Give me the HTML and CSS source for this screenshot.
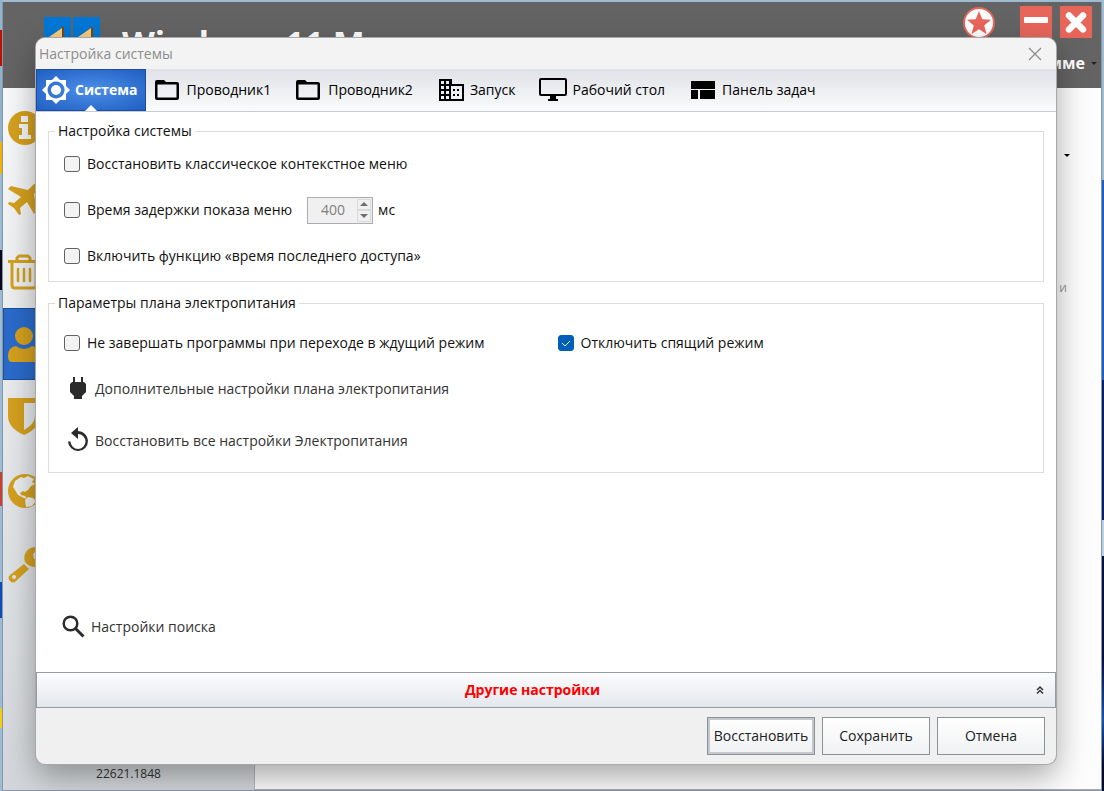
FILE: index.html
```html
<!DOCTYPE html>
<html lang="ru">
<head>
  <meta charset="UTF-8" />
  <title>Настройка системы</title>
  <link rel="stylesheet" href="styles.css">
</head>
<body>
  <div class="app-window">
    <header class="app-header">
      <svg class="app-logo" viewBox="0 0 56 56">
        <path fill="#0078d7" d="M0 0h27v27H0zM29 0h27v27H29zM0 29h27v27H0zM29 29h27v27H29z"/>
        <path fill="#7a4a16" d="M3 22L20 9v47h-8V23H3zM32 22L49 9v47h-8V23h-9z"/>
        <path fill="#f3cf86" d="M5 20L18 11v45h-4V21zM34 20l13-9v45h-4V21z"/>
      </svg>
      <div class="app-title">Windows 11 M</div>
      <div class="app-side">
        <div class="app-controls">
          <button class="star-btn" aria-label="Избранное">
            <svg viewBox="0 0 34 34"><circle cx="17" cy="17" r="15" fill="#fff" stroke="#e8655a" stroke-width="2"/><path fill="#e8655a" d="M17 5l3.300 8.300 8.700.500-6.800 5.600 2.300 8.600-7.500-4.800L9.500 28l2.300-8.600L5 13.800l8.700-.500z"/></svg>
          </button>
          <button class="app-btn" aria-label="Свернуть">
            <svg viewBox="0 0 32 32"><rect x="4" y="11" width="24" height="6" rx="1" fill="#fff"/></svg>
          </button>
          <button class="app-btn" aria-label="Закрыть">
            <svg viewBox="0 0 32 32"><path d="M9 9.500L23 23.500M23 9.500L9 23.500" stroke="#fff" stroke-width="6.500" stroke-linecap="round"/></svg>
          </button>
        </div>
        <button class="about-btn">О программе <span class="caret"></span></button>
      </div>
    </header>
    <div class="app-main">
      <nav class="sidebar">
        <a class="side-item" href="#" aria-label="Информация">
          <svg viewBox="0 0 34 34"><circle cx="17" cy="17" r="17"/><path fill="#f4f5f6" d="M13 5h7v6h-7zM11 13h9v11h3v4H11v-4h3v-7h-3z"/></svg>
        </a>
        <a class="side-item" href="#" aria-label="Оптимизация">
          <svg viewBox="0 0 34 34"><path d="M32 1c-2-2-5-1-7 1l-5 5L3 3 0 6l13 8-7 6-5-1-1 2 6 4 5 7 2-1-1-6 7-6 7 12 3-3-3-17 5-5c2-2 3-3 1-5z"/></svg>
        </a>
        <a class="side-item" href="#" aria-label="Очистка">
          <svg viewBox="0 0 34 34"><path fill="none" stroke="#d4a01e" stroke-width="3" stroke-linejoin="round" d="M0 6.500h32M9 6V3l2-2h9l2 2v3M4 7v23q0 3 3 3h18q3 0 3-3V7"/><path fill="none" stroke="#d4a01e" stroke-width="2.500" stroke-linecap="round" d="M10 14v12M16 14v12M22 14v12"/></svg>
        </a>
        <a class="side-item active" href="#" aria-label="Настройка">
          <svg viewBox="0 0 34 34"><circle cx="16" cy="9" r="9"/><path d="M8 19q8 6 16 0 8 1 8 10 0 6-4 6H4q-4 0-4-6 0-9 8-10z"/></svg>
        </a>
        <a class="side-item tall" href="#" aria-label="Безопасность">
          <svg viewBox="0 0 34 38"><path fill-rule="evenodd" d="M0 0h32v18q0 12-16 19Q0 30 0 18zM16 5v27q11-6 11-14V5z"/></svg>
        </a>
        <a class="side-item tall" href="#" aria-label="Сеть">
          <svg viewBox="0 0 34 34"><circle cx="17" cy="17" r="17"/><path fill="#eceef0" d="M5 13l2-6 6-4 3 1 4-2 6 3-2 3 3 2-4 2-3 4-3 2-2-1-3 2 1 2 4 1 2 3-3-1-6-3-3-5zM17 26l3-3 5 1 3 3-4 5-6 1z"/></svg>
        </a>
        <a class="side-item tall" href="#" aria-label="Утилиты">
          <svg viewBox="0 0 34 34"><path fill-rule="evenodd" d="M17 14A11 11 0 0 1 28-1l4 1-7 6 1 5 5 1 3-2v6a11 11 0 0 1-12 2 11 11 0 0 1-5-4zM16 16l5 5L8 33q-3 3-6 0-3-3 0-6zM6 27a2 2 0 1 0 .100 0z"/></svg>
        </a>
        <div class="build">22621.1848</div>
      </nav>
      <div class="app-page">
        <span class="caret page-caret"></span>
        <span class="page-text">и</span>
      </div>
    </div>
  </div>

  <div class="dialog" role="dialog" aria-labelledby="dialogTitle">
    <div class="dialog-title">
      <span id="dialogTitle">Настройка системы</span>
      <button class="dialog-close" aria-label="Закрыть">
        <svg viewBox="0 0 14 14"><path d="M1 1l12 12M13 1L1 13" fill="none" stroke="#8a8a8a" stroke-width="1.200"/></svg>
      </button>
    </div>

    <nav class="tabs">
      <button class="tab active">
        <svg viewBox="0 0 28 28"><path fill="#fff" fill-rule="evenodd" d="M14 0l4 4h6v6l4 4-4 4v6h-6l-4 4-4-4H4v-6l-4-4 4-4V4h6zM14 5.500a8.500 8.500 0 1 0 .100 0z"/><circle cx="14" cy="14" r="5" fill="#fff"/></svg>
        Система
      </button>
      <button class="tab">
        <svg viewBox="0 0 28 28"><path fill-rule="evenodd" d="M3 4h7l2 2h11q2 0 2 2v14q0 2-2 2H3q-2 0-2-2V6q0-2 2-2zM3.500 8.500v13h19v-13z"/></svg>
        Проводник1
      </button>
      <button class="tab">
        <svg viewBox="0 0 28 28"><path fill-rule="evenodd" d="M3 4h7l2 2h11q2 0 2 2v14q0 2-2 2H3q-2 0-2-2V6q0-2 2-2zM3.500 8.500v13h19v-13z"/></svg>
        Проводник2
      </button>
      <button class="tab">
        <svg viewBox="0 0 28 28"><path fill-rule="evenodd" d="M2 3h13v5h12v17H2zM4 5v3h3V5zM9 5v3h3V5zM4 10v3h3v-3zM9 10v3h3v-3zM4 15v3h3v-3zM9 15v3h3v-3zM4 20v3h3v-3zM9 20v3h3v-3zM14 10v13h11V10z"/><path d="M16 13h2v2h-2zM20 13h2v2h-2zM16 18h2v2h-2zM20 18h2v2h-2z"/></svg>
        Запуск
      </button>
      <button class="tab">
        <svg viewBox="0 0 28 28"><path fill-rule="evenodd" d="M2 2h24q2 0 2 2v14q0 2-2 2h-9v3h2v2H9v-2h2v-3H2q-2 0-2-2V4q0-2 2-2zM2 4v14h24V4z"/></svg>
        Рабочий стол
      </button>
      <button class="tab">
        <svg viewBox="0 0 28 28"><path d="M2 5h24v8H2zM2 14h7v9H2zM11 14h15v9H11z"/></svg>
        Панель задач
      </button>
    </nav>

    <main class="content">
      <fieldset class="group">
        <legend>Настройка системы</legend>
        <div class="row">
          <label class="check"><input type="checkbox" /> Восстановить классическое контекстное меню</label>
        </div>
        <div class="row">
          <label class="check"><input type="checkbox" /> Время задержки показа меню</label>
          <div class="spinner">
            <input type="text" id="delay" value="400" disabled />
            <div class="spin-btns">
              <button aria-label="Больше" disabled><span class="spin-up"></span></button>
              <button aria-label="Меньше" disabled><span class="spin-down"></span></button>
            </div>
          </div>
          <label for="delay">мс</label>
        </div>
        <div class="row">
          <label class="check"><input type="checkbox" /> Включить функцию «время последнего доступа»</label>
        </div>
      </fieldset>

      <fieldset class="group power">
        <legend>Параметры плана электропитания</legend>
        <div class="columns">
          <label class="check"><input type="checkbox" /> Не завершать программы при переходе в ждущий режим</label>
          <label class="check"><input type="checkbox" checked /> Отключить спящий режим</label>
        </div>
        <button class="action">
          <svg viewBox="0 0 24 24"><path d="M7 0h2v5h6V0h2v5h1l2 2v8l-4 4v3H8v-3l-4-4V7l2-2h1z"/></svg>
          Дополнительные настройки плана электропитания
        </button>
        <button class="action">
          <svg viewBox="0 0 24 24"><path d="M12 2v-4L5 4l7 6V5a7.500 7.500 0 1 1-7.500 7.500H2A10 10 0 1 0 12 2z"/></svg>
          Восстановить все настройки Электропитания
        </button>
      </fieldset>

      <button class="action search">
        <svg viewBox="0 0 24 24"><circle cx="8.500" cy="8.500" r="6.800" fill="none" stroke="#2b2b2b" stroke-width="2.500"/><path d="M13.500 13.500l8 8" stroke="#2b2b2b" stroke-width="3"/></svg>
        Настройки поиска
      </button>
    </main>

    <button class="more-bar">
      <span>Другие настройки</span>
      <svg viewBox="0 0 8 8"><path d="M1 4l3-3 3 3M1 7.500l3-3 3 3" fill="none" stroke="#333" stroke-width="1.500"/></svg>
    </button>

    <footer class="dialog-footer">
      <button class="btn default">Восстановить</button>
      <button class="btn">Сохранить</button>
      <button class="btn">Отмена</button>
    </footer>
  </div>
</body>
</html>
```
FILE: styles.css
```css
* {
  box-sizing: border-box;
}
body {
  margin: 0;
  padding: 2px 2px 0 2px;
  height: 100vh;
  overflow: hidden;
  font-family: "Open Sans", "Noto Sans", sans-serif;
  font-size: 14px;
  line-height: 18px;
  color: #111;
  background:
    linear-gradient(#9fbcd2 0 180px, #1d5fc4 180px 380px, #0a1f66 380px 520px, #b9d3e4 520px 556px, #06103f 556px 660px, #1552b0 720px, #040b33 764px) right / 3px 100% no-repeat,
    linear-gradient(#8fb4d2 0 30px, #b81207 30px 66px, #8fb4d2 66px 142px, #f0b400 142px 174px, #9cbdd6 174px 250px, #0a0a20 250px 290px, #9cbdd6 290px 472px, #c9412f 472px 506px, #9cbdd6 506px 582px, #0d4fb8 582px 618px, #9cbdd6 618px 708px, #f2cf10 708px 728px, #9cbdd6 728px) left / 3px 100% no-repeat,
    #9fbcd2;
}
button {
  font: inherit;
  color: inherit;
  background: none;
  border: none;
  padding: 0;
}
svg {
  display: block;
  flex: none;
  overflow: visible;
}

/* main window */
.app-window {
  height: 100%;
  display: flex;
  flex-direction: column;
  border: 1px solid #8a96a3;
  border-top: none;
  background-color: #fdfdfd;
}
.app-header {
  height: 86px;
  display: flex;
  flex: none;
  background-color: #646464;
  padding-left: 41px;
}
.app-logo {
  width: 56px;
  height: 56px;
  margin-top: 15px;
}
.app-title {
  margin: 21px 0 0 22px;
  font-size: 34px;
  line-height: 40px;
  font-weight: bold;
  color: #fff;
}
.app-side {
  margin-left: auto;
  display: flex;
  flex-direction: column;
  align-items: flex-end;
  padding: 4px 4px 0 0;
}
.app-controls {
  display: flex;
  gap: 8px;
  padding-right: 5px;
}
.app-btn {
  width: 32px;
  height: 32px;
  background-color: #e8655a;
}
.star-btn {
  width: 34px;
  height: 34px;
  margin-right: 16px;
}
.about-btn {
  display: flex;
  align-items: center;
  gap: 6px;
  margin-top: 14px;
  font-size: 16px;
  font-weight: bold;
  color: #fff;
}
.caret {
  border: 3px solid transparent;
  border-top-color: #222;
  border-bottom: none;
}
.app-main {
  flex: 1;
  display: flex;
  min-height: 0;
}
.sidebar {
  width: 252px;
  display: flex;
  flex-direction: column;
  padding-top: 4px;
  background: linear-gradient(#f8f9fa, #d3d7db);
  border-right: 1px solid #b5b8bb;
}
.side-item {
  height: 72px;
  flex: none;
  display: flex;
  align-items: center;
  padding-left: 5px;
}
.side-item svg {
  width: 34px;
  fill: #d4a01e;
}
.side-item.active {
  background-color: #2a6bcb;
  border: 1px solid #1c4f9e;
  padding-left: 4px;
}
.side-item.tall {
  height: 74px;
}
.build {
  margin: auto 0 7px;
  text-align: center;
  font-size: 12px;
  color: #333;
}
.app-page {
  flex: 1;
  display: flex;
  flex-direction: column;
  align-items: flex-end;
  border-bottom: 1px solid #aaa;
}
.page-caret {
  margin: 66px 31px 0 0;
  border-top-color: #000;
}
.page-text {
  margin: 122px 34px 0 0;
  font-size: 12px;
  color: #9a9a9a;
}

/* dialog */
.dialog {
  position: absolute;
  top: 38px;
  right: 48px;
  bottom: 27px;
  left: 36px;
  display: flex;
  flex-direction: column;
  background-color: #f0f0f0;
  border-radius: 9px;
  overflow: hidden;
  box-shadow: 0 0 0 1px #a8a8a8, 0 12px 32px rgba(0, 0, 0, 0.35);
}
.dialog-title {
  height: 31px;
  flex: none;
  display: flex;
  align-items: center;
  justify-content: space-between;
  padding: 0 14px 0 3px;
  background-color: #f3f3f3;
  color: #8d8d8d;
}
.dialog-close svg {
  width: 14px;
  height: 14px;
}
.tabs {
  height: 43px;
  flex: none;
  display: flex;
  background: linear-gradient(#dfe2e7, #fafbfc);
  border-bottom: 1px solid #c8cbce;
}
.tab {
  position: relative;
  display: flex;
  align-items: center;
  gap: 5px;
  padding: 0 16px 0 8px;
  color: #000;
}
.tab svg {
  width: 28px;
  height: 28px;
}
.tab.active {
  padding: 0 7px 0 5px;
  border: 1px solid #1a4fa8;
  background: radial-gradient(#4d8fe8, #1f5fc2);
  font-weight: bold;
  color: #fff;
}
.tab.active::after {
  content: "";
  position: absolute;
  bottom: -1px;
  left: 50%;
  margin-left: -6px;
  border: 6px solid transparent;
  border-top: none;
  border-bottom-color: #fff;
}
.content {
  flex: 1;
  display: flex;
  flex-direction: column;
  gap: 12px;
  padding: 10px 12px 28px;
  background-color: #fff;
}
.group {
  display: flex;
  flex-direction: column;
  gap: 18px;
  margin: 0;
  padding: 10px 0 11px 15px;
  border: 1px solid #dcdcdc;
  min-width: 0;
}
.group legend {
  margin-left: -9px;
  padding: 0 3px;
}
.row {
  display: flex;
  align-items: center;
  min-height: 28px;
}
.check {
  display: flex;
  align-items: center;
  gap: 7px;
}
.check input {
  appearance: none;
  width: 16px;
  height: 16px;
  margin: 0;
  border: 1px solid #626262;
  border-radius: 3px;
  background-color: #f3f3f3;
}
.check input:checked {
  border-color: #005fb8;
  background: #005fb8 url("data:image/svg+xml,%3Csvg xmlns='http://www.w3.org/2000/svg' viewBox='0 0 14 14'%3E%3Cpath d='M3 7l3 3 5-5' fill='none' stroke='white'/%3E%3C/svg%3E");
}
.spinner {
  display: flex;
  width: 66px;
  height: 27px;
  margin: 0 5px 0 15px;
  padding: 1px;
  border: 1px solid #abadb3;
  background-color: #f0f0f0;
}
.spinner input {
  flex: 1;
  min-width: 0;
  padding: 0;
  border: none;
  background: none;
  font: inherit;
  text-align: center;
  color: #808080;
}
.spin-btns {
  display: flex;
  flex-direction: column;
  width: 14px;
}
.spin-btns button {
  flex: 1;
  display: flex;
  align-items: center;
  justify-content: center;
  border: 1px solid #dadada;
}
.spin-up,
.spin-down {
  border: 4px solid transparent;
}
.spin-up {
  border-top: none;
  border-bottom-color: #6d6d6d;
}
.spin-down {
  border-bottom: none;
  border-top-color: #6d6d6d;
}
.power {
  padding-top: 20px;
  padding-bottom: 14px;
}
.columns {
  display: grid;
  grid-template-columns: 1fr 1fr;
  column-gap: 8px;
  min-height: 22px;
}
.action {
  display: flex;
  align-items: center;
  align-self: flex-start;
  gap: 5px;
  height: 34px;
  padding-left: 2px;
  color: #333;
}
.action svg {
  width: 24px;
  height: 24px;
  fill: #2b2b2b;
}
.search {
  margin-top: auto;
  margin-left: 12px;
}
.more-bar {
  height: 36px;
  flex: none;
  display: flex;
  align-items: center;
  padding: 0 11px 0 0;
  border: 1px solid #949ba8;
  background: linear-gradient(#fdfdfe, #e3e7ec);
  font-weight: bold;
  color: #f00;
}
.more-bar span {
  flex: 1;
  padding-right: 8px;
}
.more-bar svg {
  width: 8px;
  height: 8px;
}
.dialog-footer {
  height: 56px;
  flex: none;
  display: flex;
  align-items: center;
  justify-content: flex-end;
  gap: 7px;
  padding-right: 11px;
}
.btn {
  width: 108px;
  height: 38px;
  border: 1px solid #8d9299;
  background: linear-gradient(#fff, #f0f1f3);
  color: #222;
}
.btn.default {
  box-shadow: inset 0 0 0 2px #c3c7cc;
}
```
